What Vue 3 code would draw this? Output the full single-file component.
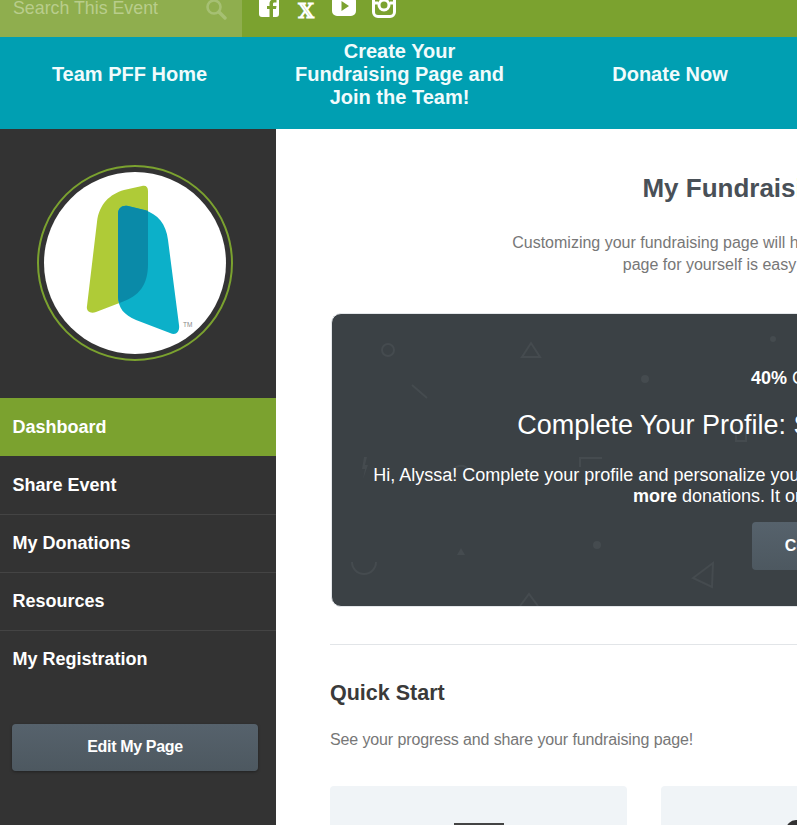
<template>
  <div class="page">
    <div class="topbar">
      <div class="search">
        <span class="search-text">Search This Event</span>
        <svg class="search-icon" width="22" height="22" viewBox="0 0 22 22">
          <circle cx="9" cy="9" r="6.5" fill="none" stroke="currentColor" stroke-width="2.6" />
          <path d="M14 14l6 6" stroke="currentColor" stroke-width="3.4" stroke-linecap="round" />
        </svg>
      </div>
      <div class="social">
        <svg width="20" height="22" viewBox="0 0 20 22">
          <path fill="#fff" fill-rule="evenodd" d="M3 0h14a3 3 0 0 1 3 3v16a3 3 0 0 1-3 3h-3v-8h3l.5-3H14V9c0-1 .4-1.600 1.600-1.600H17.500V4.500h-2.700C12 4.500 10.500 6 10.500 8.600V11H8v3h2.500v8H3a3 3 0 0 1-3-3V3a3 3 0 0 1 3-3z" />
        </svg>
        <span class="x-mark">𝕏</span>
        <svg class="yt" width="24" height="22" viewBox="0 0 24 22">
          <path fill="#fff" fill-rule="evenodd" d="M5 0h14a5 5 0 0 1 5 5v10a5 5 0 0 1-5 5H5a5 5 0 0 1-5-5V5a5 5 0 0 1 5-5zM9.500 5v10l7.500-5z" />
        </svg>
        <svg class="insta" width="24" height="24" viewBox="0 0 24 24">
          <rect x="1.500" y="1.500" width="21" height="21" rx="4.500" fill="none" stroke="#fff" stroke-width="3" />
          <path d="M1 9h5M18 9h5" stroke="#fff" stroke-width="3" />
          <circle cx="12" cy="11" r="5" fill="none" stroke="#fff" stroke-width="3" />
        </svg>
      </div>
    </div>

    <nav class="mainnav">
      <a v-for="item in mainLinks" :key="item" class="mainnav-item">{{ item }}</a>
    </nav>

    <div class="layout">
      <aside class="sidebar">
        <div class="logo-wrap">
          <div class="logo-ring">
            <svg width="182" height="182" viewBox="0 0 182 182">
              <circle cx="91" cy="91" r="91" fill="#fff" />
              <path fill="#afcb37" d="M98 14C102 13 104 15 104 19V92C104 113 95 124 78 130L52 140C46 142 42 139 43 134L53 50C55 32 66 22 80 18Z" />
              <path fill="#0cb0c9" d="M74 42C74 36 78 33 84 34L100 38C114 42 122 52 124 68L135 153C136 160 132 164 126 161L92 148C80 143 74 136 74 124Z" />
              <path fill="#0a8aa8" d="M74 42C74 36 78 33 84 34L104 38.800V92C104 113 95 124 78 130L75.500 131C74.500 129 74 127 74 124Z" />
              <text x="139" y="155" class="tm">TM</text>
            </svg>
          </div>
        </div>
        <ul class="sidenav">
          <li v-for="(item, i) in sideLinks" :key="item" :class="{ active: i === 0 }">{{ item }}</li>
        </ul>
        <button class="edit-btn">Edit My Page</button>
      </aside>

      <main class="content">
        <div class="intro">
          <h1>My Fundraising Dashboard</h1>
          <p>Customizing your fundraising page will help you raise much more money. Creating a<br />page for yourself is easy and it takes about a minute!</p>
        </div>

        <section class="profile-card">
          <svg class="shapes" width="958" height="292" viewBox="0 0 958 292">
            <g fill="none" stroke="#454b4f" stroke-width="2">
              <circle cx="56" cy="36" r="6" />
              <path d="M190 43l9-14 9 14z" />
              <path d="M80 71l15 13" />
              <path d="M20 248a12 12 0 0 0 24 0" />
              <path d="M381 249L361 264L380 273Z" />
              <path d="M248 153v-9h22" />
              <path d="M404 115v12h10v-12" />
              <path d="M188 292l9-12 9 12" />
              <path d="M119 160a10 10 0 0 1 18 -4" />
            </g>
            <g fill="#454b4f">
              <circle cx="313" cy="65" r="4" />
              <circle cx="265" cy="231" r="4" />
              <circle cx="441" cy="25" r="3" />
              <path d="M125 241l4-7 4 7z" />
              <path d="M32 143l-2 12h3l-2 10 5-14h-3l2-8z" />
            </g>
          </svg>
          <div class="profile-inner">
            <div class="progress-label"><strong>40%</strong> Complete</div>
            <h2>Complete Your Profile: Start Fundraising Quickly!</h2>
            <p>Hi, Alyssa! Complete your profile and personalize your page to share your tale with friends to help you receive<br /><strong>more</strong> donations. It only takes a few minutes.</p>
            <button class="complete-btn">Continue</button>
          </div>
        </section>

        <hr class="divider" />

        <h3 class="qs-title">Quick Start</h3>
        <p class="qs-sub">See your progress and share your fundraising page!</p>

        <div class="qs-cards">
          <div class="qs-card">
            <span class="qs-bar"></span>
          </div>
          <div class="qs-card">
            <span class="qs-dot"></span>
          </div>
        </div>
      </main>
    </div>
  </div>
</template>

<script setup>
const mainLinks = ['Team PFF Home', 'Create Your Fundraising Page and Join the Team!', 'Donate Now']
const sideLinks = ['Dashboard', 'Share Event', 'My Donations', 'Resources', 'My Registration']
</script>

<style>
html,
body {
  margin: 0;
  overflow: hidden;
}
</style>

<style scoped>
.page {
  width: 797px;
  height: 825px;
  overflow: hidden;
  font-family: "Liberation Sans", Arial, sans-serif;
  background: #fff;
}

.topbar {
  display: flex;
  height: 37px;
  background: #7ba22f;
  overflow: hidden;
}

.search {
  display: flex;
  justify-content: space-between;
  width: 242px;
  box-sizing: border-box;
  padding: 0 15px 0 13px;
  background: #8fae4e;
  color: #b9cd8c;
}

.search-text {
  font-size: 17.800px;
  line-height: 17px;
}

.search-icon {
  margin-top: -2px;
  color: #a6c073;
}

.social {
  display: flex;
  align-items: flex-start;
  gap: 19px;
  margin-top: -5px;
  padding-left: 17px;
}

.yt {
  margin-top: 1px;
  margin-left: -1px;
}

.insta {
  margin-top: -1px;
  margin-left: -3px;
}

.x-mark {
  margin-top: 4px;
  color: #fff;
  font-family: "DejaVu Serif", serif;
  font-size: 21px;
  font-weight: 700;
  line-height: 24px;
}

.mainnav {
  display: flex;
  width: 800px;
  height: 92px;
  background: #009fb2;
}

.mainnav-item {
  display: flex;
  align-items: center;
  justify-content: center;
  box-sizing: border-box;
  padding: 0 15px 18px;
  color: #f1fbfc;
  font-size: 20px;
  font-weight: 700;
  line-height: 23px;
  text-align: center;
}

.mainnav-item:nth-child(1) {
  width: 259px;
}

.mainnav-item:nth-child(2) {
  width: 281px;
  padding: 0 30px 18px;
}

.mainnav-item:nth-child(3) {
  width: 260px;
}

.layout {
  display: flex;
  height: 696px;
}

.sidebar {
  flex: none;
  width: 276px;
  background: #333;
}

.logo-wrap {
  display: flex;
  padding: 36px 0 37px 37px;
}

.logo-ring {
  display: flex;
  align-items: center;
  justify-content: center;
  width: 196px;
  height: 196px;
  box-sizing: border-box;
  border: 2px solid #7ba22f;
  border-radius: 50%;
}

.tm {
  fill: #888;
  font-size: 6.500px;
}

.sidenav {
  margin: 0;
  padding: 0;
  list-style: none;
}

.sidenav li {
  height: 58px;
  box-sizing: border-box;
  padding-left: 12.500px;
  border-bottom: 1px solid #444;
  color: #fff;
  font-size: 18px;
  font-weight: 700;
  line-height: 57px;
}

.sidenav li + li {
  margin-top: 0;
}

.sidenav li.active {
  height: 59px;
  margin-bottom: 0;
  padding-top: 1px;
  background: linear-gradient(#7ba22f 58px, #333 58px);
  border-bottom: 0;
}

.sidenav li:last-child {
  border-bottom: 0;
}

.edit-btn {
  display: block;
  width: 246px;
  height: 47px;
  margin: 35px 0 0 12px;
  padding-bottom: 3px;
  border: 0;
  border-radius: 4px;
  background: linear-gradient(#56626c, #4d5860);
  box-shadow: 0 1px 3px rgba(0, 0, 0, 0.35);
  color: #fff;
  font-family: inherit;
  font-size: 16px;
  font-weight: 700;
  letter-spacing: -0.35px;
}

.content {
  flex: none;
  width: 1020px;
  box-sizing: border-box;
  padding: 0 0 0 54px;
}

.intro {
  width: 960px;
  text-align: center;
}

.intro h1 {
  margin: 0;
  padding-top: 44px;
  color: #495057;
  font-size: 26px;
  font-weight: 700;
  line-height: 30px;
}

.intro p {
  margin: 29px 0 0;
  color: #777;
  font-size: 16px;
  line-height: 22px;
}

.profile-card {
  position: relative;
  width: 956px;
  height: 292px;
  margin: 37px 0 0 1px;
  overflow: hidden;
  border: 1px solid #e4e7ea;
  border-radius: 10px;
  background: #3b4145;
}

.shapes {
  position: absolute;
  top: 0;
  left: 0;
}

.profile-inner {
  position: relative;
  padding-top: 54px;
  color: #fff;
  text-align: center;
}

.progress-label {
  font-size: 18px;
  line-height: 20px;
}

.profile-inner h2 {
  margin: 21px 0 0;
  font-size: 27px;
  font-weight: 400;
  line-height: 32px;
}

.profile-inner p {
  margin: 24px 0 0;
  font-size: 18px;
  line-height: 21px;
}

.complete-btn {
  height: 48px;
  margin: 15px 0 0 19px;
  padding: 0 33px;
  border: 0;
  border-radius: 4px;
  background: linear-gradient(#56626c, #4d5860);
  color: #fff;
  font-family: inherit;
  font-size: 16px;
  font-weight: 700;
}

.divider {
  width: 960px;
  height: 1px;
  margin: 37px 0 0;
  border: 0;
  background: #e2e5e8;
}

.qs-title {
  margin: 35px 0 0;
  color: #3a3a3a;
  font-size: 21.500px;
  font-weight: 700;
  line-height: 26px;
}

.qs-sub {
  margin: 23px 0 0;
  color: #777;
  font-size: 16px;
  letter-spacing: -0.12px;
  line-height: 22px;
}

.qs-cards {
  display: flex;
  gap: 34px;
  margin-top: 35px;
}

.qs-card {
  position: relative;
  width: 297px;
  height: 200px;
  border-radius: 4px;
  background: #f0f4f7;
}

.qs-bar {
  position: absolute;
  top: 37px;
  left: 124px;
  width: 50px;
  height: 2px;
  background: #444;
}

.qs-dot {
  position: absolute;
  top: 34px;
  left: 125px;
  width: 20px;
  height: 20px;
  border-radius: 50%;
  background: #333;
}
</style>
